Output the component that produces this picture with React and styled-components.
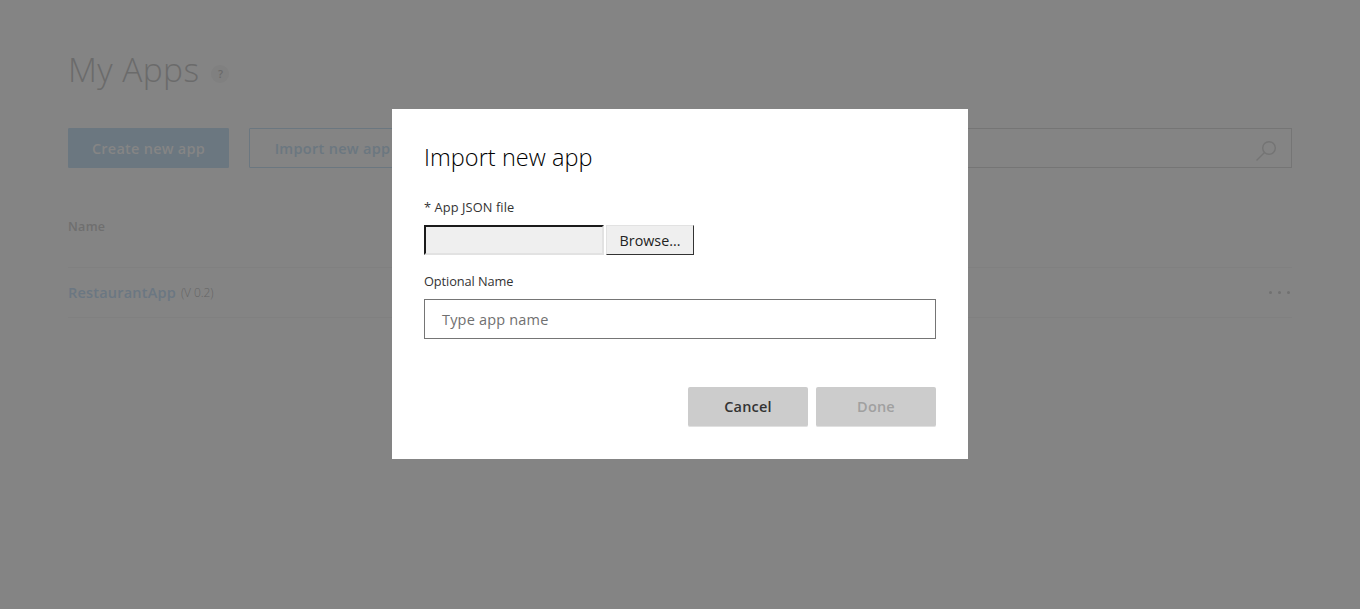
import React from "react";
import styled, { createGlobalStyle } from "styled-components";

const Global = createGlobalStyle`
  * { box-sizing: border-box; }
  body { margin: 0; background: #848484; font-family: "Open Sans", "Noto Sans", sans-serif; }
`;

const Label = styled.span`
  display: inline-block;
  white-space: nowrap;
  font-size: ${(p) => p.$size}px;
  font-weight: ${(p) => p.$weight || 400};
  letter-spacing: ${(p) => p.$track || 0}px;
  color: ${(p) => p.$color};
  line-height: ${(p) => p.$line || 20}px;
`;

const Page = styled.main`
  height: 609px;
  padding: 44px 68px 0;
  overflow: hidden;
`;

const Header = styled.header`
  display: flex;
  align-items: center;
  gap: 12px;
  height: 50px;
`;

const Help = styled.span`
  display: flex;
  align-items: center;
  justify-content: center;
  width: 18px;
  height: 18px;
  margin-top: 9px;
  border-radius: 50%;
  background: #808080;
`;

const Toolbar = styled.div`
  display: flex;
  gap: 20px;
  height: 40px;
  margin-top: 34px;
`;

const PageButton = styled.button`
  width: ${(p) => p.$width}px;
  height: 40px;
  padding: 1px 0 0;
  border: 1px solid #6b7780;
  border-radius: 1px;
  background: ${(p) => (p.$filled ? "#6b7780" : "transparent")};
  font-family: inherit;
`;

const Search = styled.div`
  flex: 1;
  display: flex;
  align-items: center;
  justify-content: flex-end;
  padding: 5px 14px 0 0;
  border: 1px solid #757575;
`;

const ColumnHead = styled.div`
  height: 100px;
  padding-top: 46px;
  border-bottom: 1px solid #808080;
`;

const AppRow = styled.div`
  display: flex;
  align-items: center;
  gap: 5px;
  height: 50px;
  border-bottom: 1px solid #808080;
`;

const AppVersion = styled.span`
  display: flex;
  padding-top: 1px;
`;

const More = styled.span`
  display: flex;
  gap: 6px;
  margin-left: auto;
  padding: 0 2px 0 0;
`;

const Dot = styled.i`
  width: 3px;
  height: 3px;
  border-radius: 50%;
  background: #717171;
`;

const Overlay = styled.div`
  position: fixed;
  inset: 0;
  display: flex;
  justify-content: center;
  align-items: flex-start;
  padding-top: 109px;
`;

const Dialog = styled.section`
  display: flex;
  flex-direction: column;
  width: 576px;
  height: 350px;
  padding: 32px;
  background: #fff;
`;

const Title = styled.h1`
  display: flex;
  height: 32px;
  margin: 0 0 24px;
`;

const Field = styled.div`
  display: flex;
  flex-direction: column;
  align-items: flex-start;
  gap: 8px;
  margin-bottom: ${(p) => p.$after}px;
`;

const FileRow = styled.div`
  display: flex;
  gap: 2px;
  height: 30px;
`;

const FilePath = styled.div`
  width: 180px;
  background: #efefef;
  border: 2px solid;
  border-color: #1b1b1b #e2e2e2 #e2e2e2 #1b1b1b;
`;

const Browse = styled.button`
  width: 88px;
  padding: 1px 0 0;
  background: #efefef;
  border: 1px solid;
  border-color: #e2e2e2 #333 #333 #e2e2e2;
  font-family: inherit;
`;

const NameInput = styled.div`
  display: flex;
  align-items: center;
  width: 100%;
  height: 40px;
  padding: 2px 17px 0;
  border: 1px solid #757575;
`;

const Actions = styled.footer`
  display: flex;
  justify-content: flex-end;
  gap: 8px;
  margin-top: auto;
`;

const ActionButton = styled.button`
  width: 120px;
  height: 40px;
  padding: 1px 0 0;
  border: 0;
  border-bottom: 1px solid #e0e0e0;
  border-radius: 2px;
  background: #ccc;
  font-family: inherit;
`;

export default function App() {
  return (
    <>
      <Global />
      <Page>
        <Header>
          <Label $size={33.5} $weight={300} $line={50} $track={0.4} $color="#6b6b6b">My Apps</Label>
          <Help><Label $size={11} $weight={600} $line={16} $color="#6a6a6a">?</Label></Help>
        </Header>
        <Toolbar>
          <PageButton $width={161} $filled>
            <Label $size={14.5} $weight={600} $track={0.25} $color="#858585">Create new app</Label>
          </PageButton>
          <PageButton $width={167}>
            <Label $size={14.5} $weight={600} $track={0.3} $color="#6b7780">Import new app</Label>
          </PageButton>
          <Search>
            <svg width="22" height="22" viewBox="0 0 22 22" fill="none" stroke="#747474" strokeWidth="1.4">
              <circle cx="14" cy="8" r="6.3" />
              <path d="M9.5 12.5 1.5 20.5" />
            </svg>
          </Search>
        </Toolbar>
        <ColumnHead>
          <Label $size={12.5} $weight={600} $track={0.3} $color="#6f6f6f">Name</Label>
        </ColumnHead>
        <AppRow>
          <Label $size={14.5} $weight={600} $track={0.2} $color="#6b7782">RestaurantApp</Label>
          <AppVersion><Label $size={12} $weight={300} $track={-0.1} $color="#656565">(V 0.2)</Label></AppVersion>
          <More><Dot /><Dot /><Dot /></More>
        </AppRow>
      </Page>
      <Overlay>
        <Dialog>
          <Title><Label $size={23.5} $weight={300} $track={0.05} $line={32} $color="#000">Import new app</Label></Title>
          <Field $after={16}>
            <Label $size={12.8} $color="#333" $track={0.1}>* App JSON file</Label>
            <FileRow>
              <FilePath />
              <Browse><Label $size={14.3} $color="#222">Browse...</Label></Browse>
            </FileRow>
          </Field>
          <Field $after={0}>
            <Label $size={12.8} $color="#333" $track={-0.1}>Optional Name</Label>
            <NameInput><Label $size={14.5} $track={0.18} $color="#707070">Type app name</Label></NameInput>
          </Field>
          <Actions>
            <ActionButton><Label $size={14.5} $weight={600} $track={0.2} $color="#333">Cancel</Label></ActionButton>
            <ActionButton><Label $size={14.5} $weight={600} $track={0.2} $color="#a0a0a0">Done</Label></ActionButton>
          </Actions>
        </Dialog>
      </Overlay>
    </>
  );
}
